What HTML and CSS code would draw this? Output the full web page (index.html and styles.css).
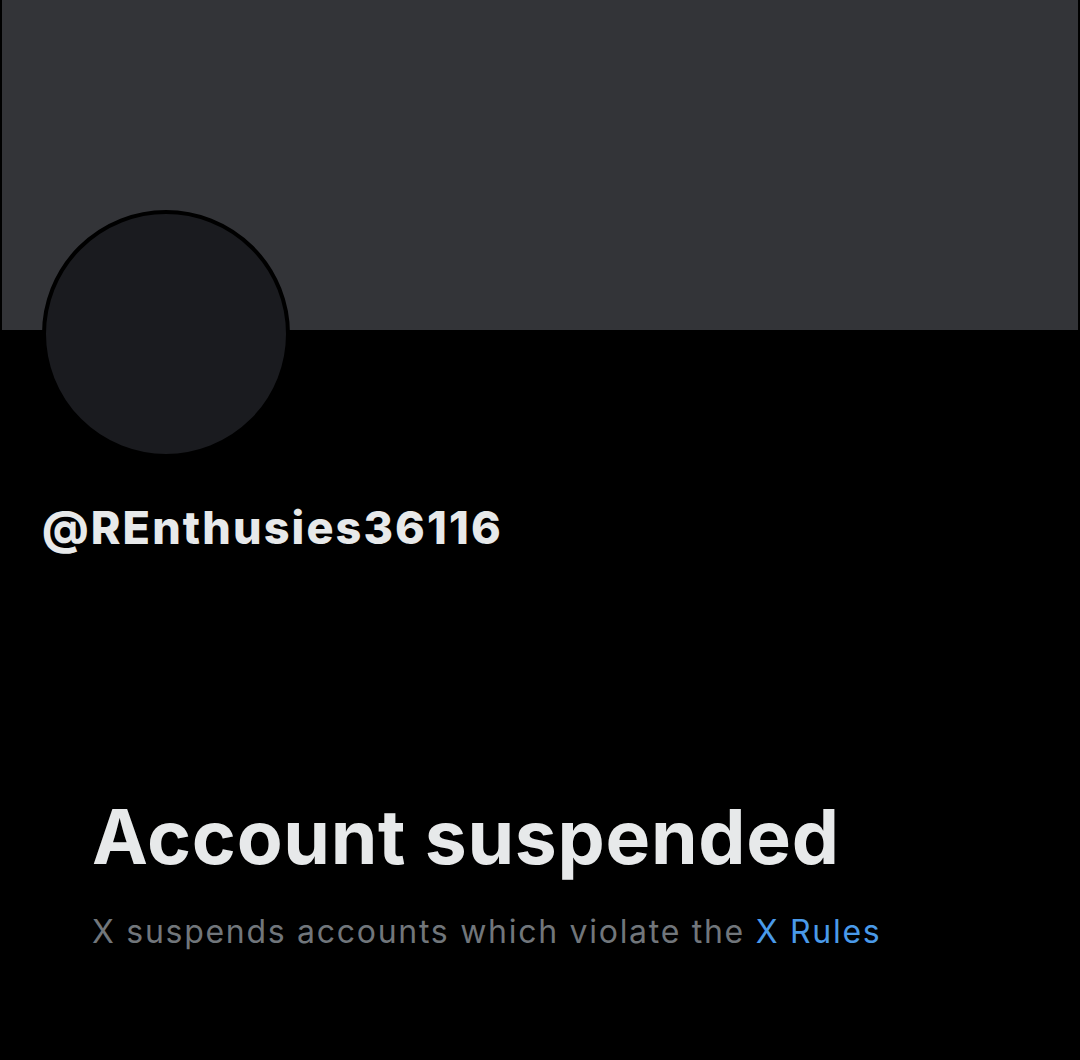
FILE: index.html
```html
<!DOCTYPE html>
<html>
<head>
<meta charset="utf-8">
<link rel="stylesheet" href="styles.css">
</head>
<body>
<div class="page">
  <div class="banner"></div>
  <div class="profile">
    <div class="avatar"></div>
    <div class="handle">@REnthusies36116</div>
  </div>
  <div class="notice">
    <h1 class="title">Account suspended</h1>
    <p class="desc">X suspends accounts which violate the <a class="link" href="#">X Rules</a></p>
  </div>
</div>
</body>
</html>
```
FILE: styles.css
```css
html, body {
  margin: 0;
  padding: 0;
  background: #000;
}
.page {
  width: 1080px;
  height: 1060px;
  background: #000;
  font-family: Inter, "Noto Sans", sans-serif;
  color: #e7e9ea;
  overflow: hidden;
}
.banner {
  height: 330px;
  margin: 0 2px;
  background: #333438;
}
.profile {
  padding: 0 0 0 42px;
  margin-top: -120px;
}
.avatar {
  width: 240px;
  height: 240px;
  border: 4px solid #000;
  border-radius: 50%;
  background: #1a1b1f;
}
.handle {
  margin-top: 44px;
  font-size: 45px;
  font-weight: 800;
  line-height: 52px;
  letter-spacing: 2.1px;
}
.notice {
  padding-left: 92px;
  margin-top: 238px;
}
.title {
  margin: 0;
  font-size: 75px;
  font-weight: 700;
  line-height: 90px;
  letter-spacing: 0.7px;
}
.desc {
  margin: 28px 0 0;
  font-size: 32px;
  line-height: 44px;
  color: #71767b;
  font-weight: 400;
  letter-spacing: 1.72px;
}
.link {
  color: #4a9ae9;
  text-decoration: none;
}
```
